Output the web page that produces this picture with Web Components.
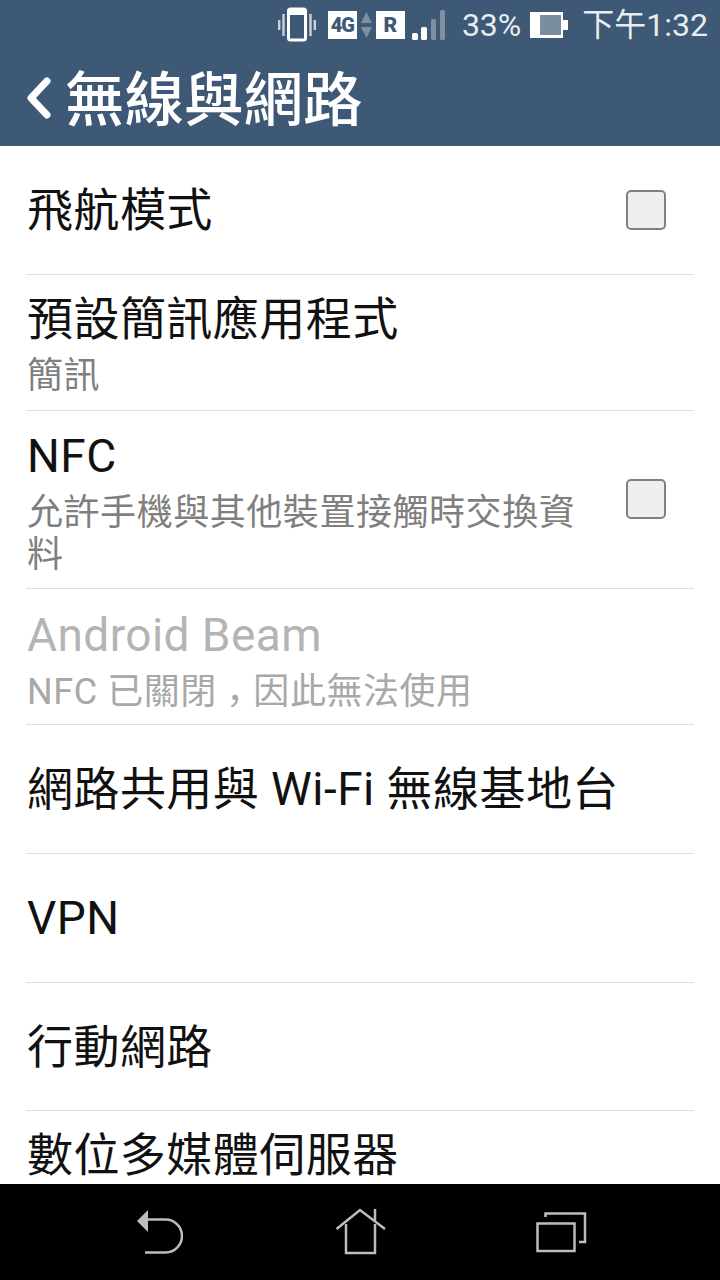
<!DOCTYPE html>
<html lang="zh-Hant">
<head>
<meta charset="utf-8">
<title>無線與網路</title>
<style>
html, body { margin: 0; padding: 0; background: #fff; }
body { font-family: Roboto, "Noto Sans CJK TC", sans-serif; }
</style>
</head>
<body>
<settings-screen>
  <status-bar slot="top"></status-bar>
  <app-bar slot="top">無線與網路</app-bar>
  <setting-row height="129" checkbox="0">飛航模式</setting-row>
  <setting-row height="136" top="17">預設簡訊應用程式<span slot="sub">簡訊</span></setting-row>
  <setting-row height="178" top="18" checkbox="2">NFC<span slot="sub">允許手機與其他裝置接觸時交換資料</span></setting-row>
  <setting-row height="136" top="19" disabled>Android Beam<span slot="sub">NFC 已關閉<span style="display:inline-block;transform:translateY(10px)">，</span>因此無法使用</span></setting-row>
  <setting-row height="129">網路共用與 Wi-Fi 無線基地台</setting-row>
  <setting-row height="129">VPN</setting-row>
  <setting-row height="128">行動網路</setting-row>
  <setting-row height="129" top="17">數位多媒體伺服器</setting-row>
  <nav-bar slot="bottom"></nav-bar>
</settings-screen>

<script>
// Page frame: blue header, clipped list, black nav bar
class SettingsScreen extends HTMLElement {
  constructor() {
    super();
    this.attachShadow({ mode: 'open' });
    this.shadowRoot.innerHTML = `
<style>
:host { display: flex; flex-direction: column; width: 720px; height: 1280px; overflow: hidden; }
header { background: #3d5975; height: 146px; flex: none; }
main { flex: 1; overflow: hidden; background: #fff; }
footer { flex: none; height: 96px; }
</style>
<header><slot name="top"></slot></header>
<main><slot></slot></main>
<footer><slot name="bottom"></slot></footer>`;
  }
}

class StatusBar extends HTMLElement {
  constructor() {
    super();
    this.attachShadow({ mode: 'open' });
    this.shadowRoot.innerHTML = `
<style>
:host { display: flex; align-items: center; justify-content: flex-end; height: 50px; padding-right: 12px; color: #e8ecf0; font: 32px Roboto, "Noto Sans CJK TC", sans-serif; }
svg { display: block; flex: none; }
.tag { flex: none; width: 29px; height: 28px; background: #fff; color: #3d5975; font: 900 20px/28px Roboto, sans-serif; text-align: center; letter-spacing: -1px; }
.pct { margin-left: 16px; }
.clock { margin-left: 14px; margin-bottom: 6px; }
.up { margin: 0 4px; }
</style>
<svg width="38" height="36" viewBox="0 0 38 36" style="margin-right:12px">
  <rect x="10.500" y="2" width="17" height="31" rx="2" fill="none" stroke="#fff" stroke-width="3"/>
  <rect x="12" y="3" width="14" height="5" fill="#fff"/>
  <g stroke="#c9d2db" stroke-width="2.400" fill="none"><path d="M5.500 7v22M1.200 13v10M32.500 7v22M36.800 13v10"/></g>
</svg>
<span class="tag">4G</span>
<svg class="up" width="11" height="28" viewBox="0 0 11 28">
  <path d="M5.500 1 11 12H0z" fill="#7d8fa1"/><path d="M5.500 27 11 16H0z" fill="#7d8fa1"/>
</svg>
<span class="tag" style="letter-spacing:0;font-size:21px">R</span>
<svg width="34" height="32" viewBox="0 0 34 32" style="margin-left:7px">
  <rect x="0" y="24" width="6" height="7" rx="1.500" fill="#fff"/>
  <rect x="9" y="18" width="6" height="13" rx="1.500" fill="#fff"/>
  <rect x="19" y="10" width="5" height="21" rx="1.500" fill="#7d8fa1"/>
  <rect x="28" y="1" width="5" height="30" rx="1.500" fill="#7d8fa1"/>
</svg>
<span class="pct">33%</span>
<svg width="38" height="26" viewBox="0 0 38 26" style="margin-left:9px">
  <rect x="0" y="0" width="33" height="26" fill="#fff"/>
  <rect x="10" y="3" width="21" height="20" fill="#7b8da0"/>
  <rect x="33" y="8" width="5" height="10" fill="#fff"/>
</svg>
<span class="clock">下午1:32</span>`;
  }
}

class AppBar extends HTMLElement {
  constructor() {
    super();
    this.attachShadow({ mode: 'open' });
    this.shadowRoot.innerHTML = `
<style>
:host { display: flex; align-items: center; height: 96px; padding-left: 27px; color: #fff; font: 500 59.500px/84px "Noto Sans CJK TC", sans-serif; }
svg { display: block; flex: none; margin-right: 14px; }
span { margin-bottom: 6px; }
</style>
<svg width="24" height="42" viewBox="0 0 24 42">
  <path d="M20 4 4 21l16 17" fill="none" stroke="#fff" stroke-width="7" stroke-linecap="round" stroke-linejoin="round"/>
</svg>
<span><slot></slot></span>`;
  }
}

// One list entry; a sub line goes in the "sub" slot
class SettingRow extends HTMLElement {
  constructor() {
    super();
    this.attachShadow({ mode: 'open' });
    const h = this.getAttribute('height');
    const top = this.getAttribute('top');
    const muted = this.hasAttribute('disabled');
    const box = this.hasAttribute('checkbox')
      ? `<check-box style="margin-bottom:${this.getAttribute('checkbox')}px"></check-box>` : '';
    this.shadowRoot.innerHTML = `
<style>
:host { display: block; box-sizing: border-box; height: ${h}px; padding: 0 26px; }
.row { box-sizing: border-box; display: flex; align-items: center; height: 100%; border-bottom: 1px solid #e0e0e0; }
.text { flex: 1; min-width: 0; align-self: ${top ? 'flex-start' : 'center'}; padding-top: ${top || 0}px; padding-left: 1px; }
.title { font: 46px/54px Roboto, "Noto Sans CJK TC", sans-serif; letter-spacing: .45px; color: ${muted ? '#b4b4b4' : '#111'}; }
.sub { font: 36px/42px Roboto, "Noto Sans CJK TC", sans-serif; letter-spacing: .55px; color: ${muted ? '#a8a8a8' : '#7f7f7f'}; margin-top: 9px; width: 556px; }
.sub:not(.has) { display: none; }
</style>
<div class="row">
  <div class="text">
    <div class="title"><slot></slot></div>
    <div class="sub"><slot name="sub"></slot></div>
  </div>
  ${box}
</div>`;
    if (this.querySelector('[slot=sub]')) this.shadowRoot.querySelector('.sub').classList.add('has');
  }
}

class CheckBox extends HTMLElement {
  constructor() {
    super();
    this.attachShadow({ mode: 'open' });
    this.shadowRoot.innerHTML = `
<style>
:host { display: block; flex: none; box-sizing: border-box; width: 40px; height: 40px; margin-right: 28px; background: #efefed; border: 2px solid #808080; border-radius: 5px; }
</style>`;
  }
}

class NavBar extends HTMLElement {
  constructor() {
    super();
    this.attachShadow({ mode: 'open' });
    this.shadowRoot.innerHTML = `
<style>
:host { display: grid; grid-template-columns: 135px 48px 152px 52px 149px 52px; align-items: center; height: 96px; background: #000; }
svg { display: block; grid-row: 1; }
</style>
<svg style="grid-column:2" width="48" height="44" viewBox="0 0 48 44">
  <path d="M2 11 13 0v22z" fill="#bdbdbd"/>
  <path d="M12 9.500H30.500a16.500 16.500 0 0 1 0 33H10" fill="none" stroke="#bdbdbd" stroke-width="2.500"/>
</svg>
<svg style="grid-column:4" width="52" height="48" viewBox="0 0 52 48">
  <path d="M1.500 21 25 2l25 19M40 1v12M11 16v29h29V16" fill="none" stroke="#bdbdbd" stroke-width="2.500"/>
</svg>
<svg style="grid-column:6" width="52" height="44" viewBox="0 0 52 44">
  <rect x="1.500" y="13.500" width="37" height="27.500" fill="none" stroke="#bdbdbd" stroke-width="2.500"/>
  <path d="M9.500 7V3.500H49V32H43" fill="none" stroke="#bdbdbd" stroke-width="2.500"/>
</svg>`;
  }
}

customElements.define('settings-screen', SettingsScreen);
customElements.define('status-bar', StatusBar);
customElements.define('app-bar', AppBar);
customElements.define('setting-row', SettingRow);
customElements.define('check-box', CheckBox);
customElements.define('nav-bar', NavBar);
</script>
</body>
</html>
